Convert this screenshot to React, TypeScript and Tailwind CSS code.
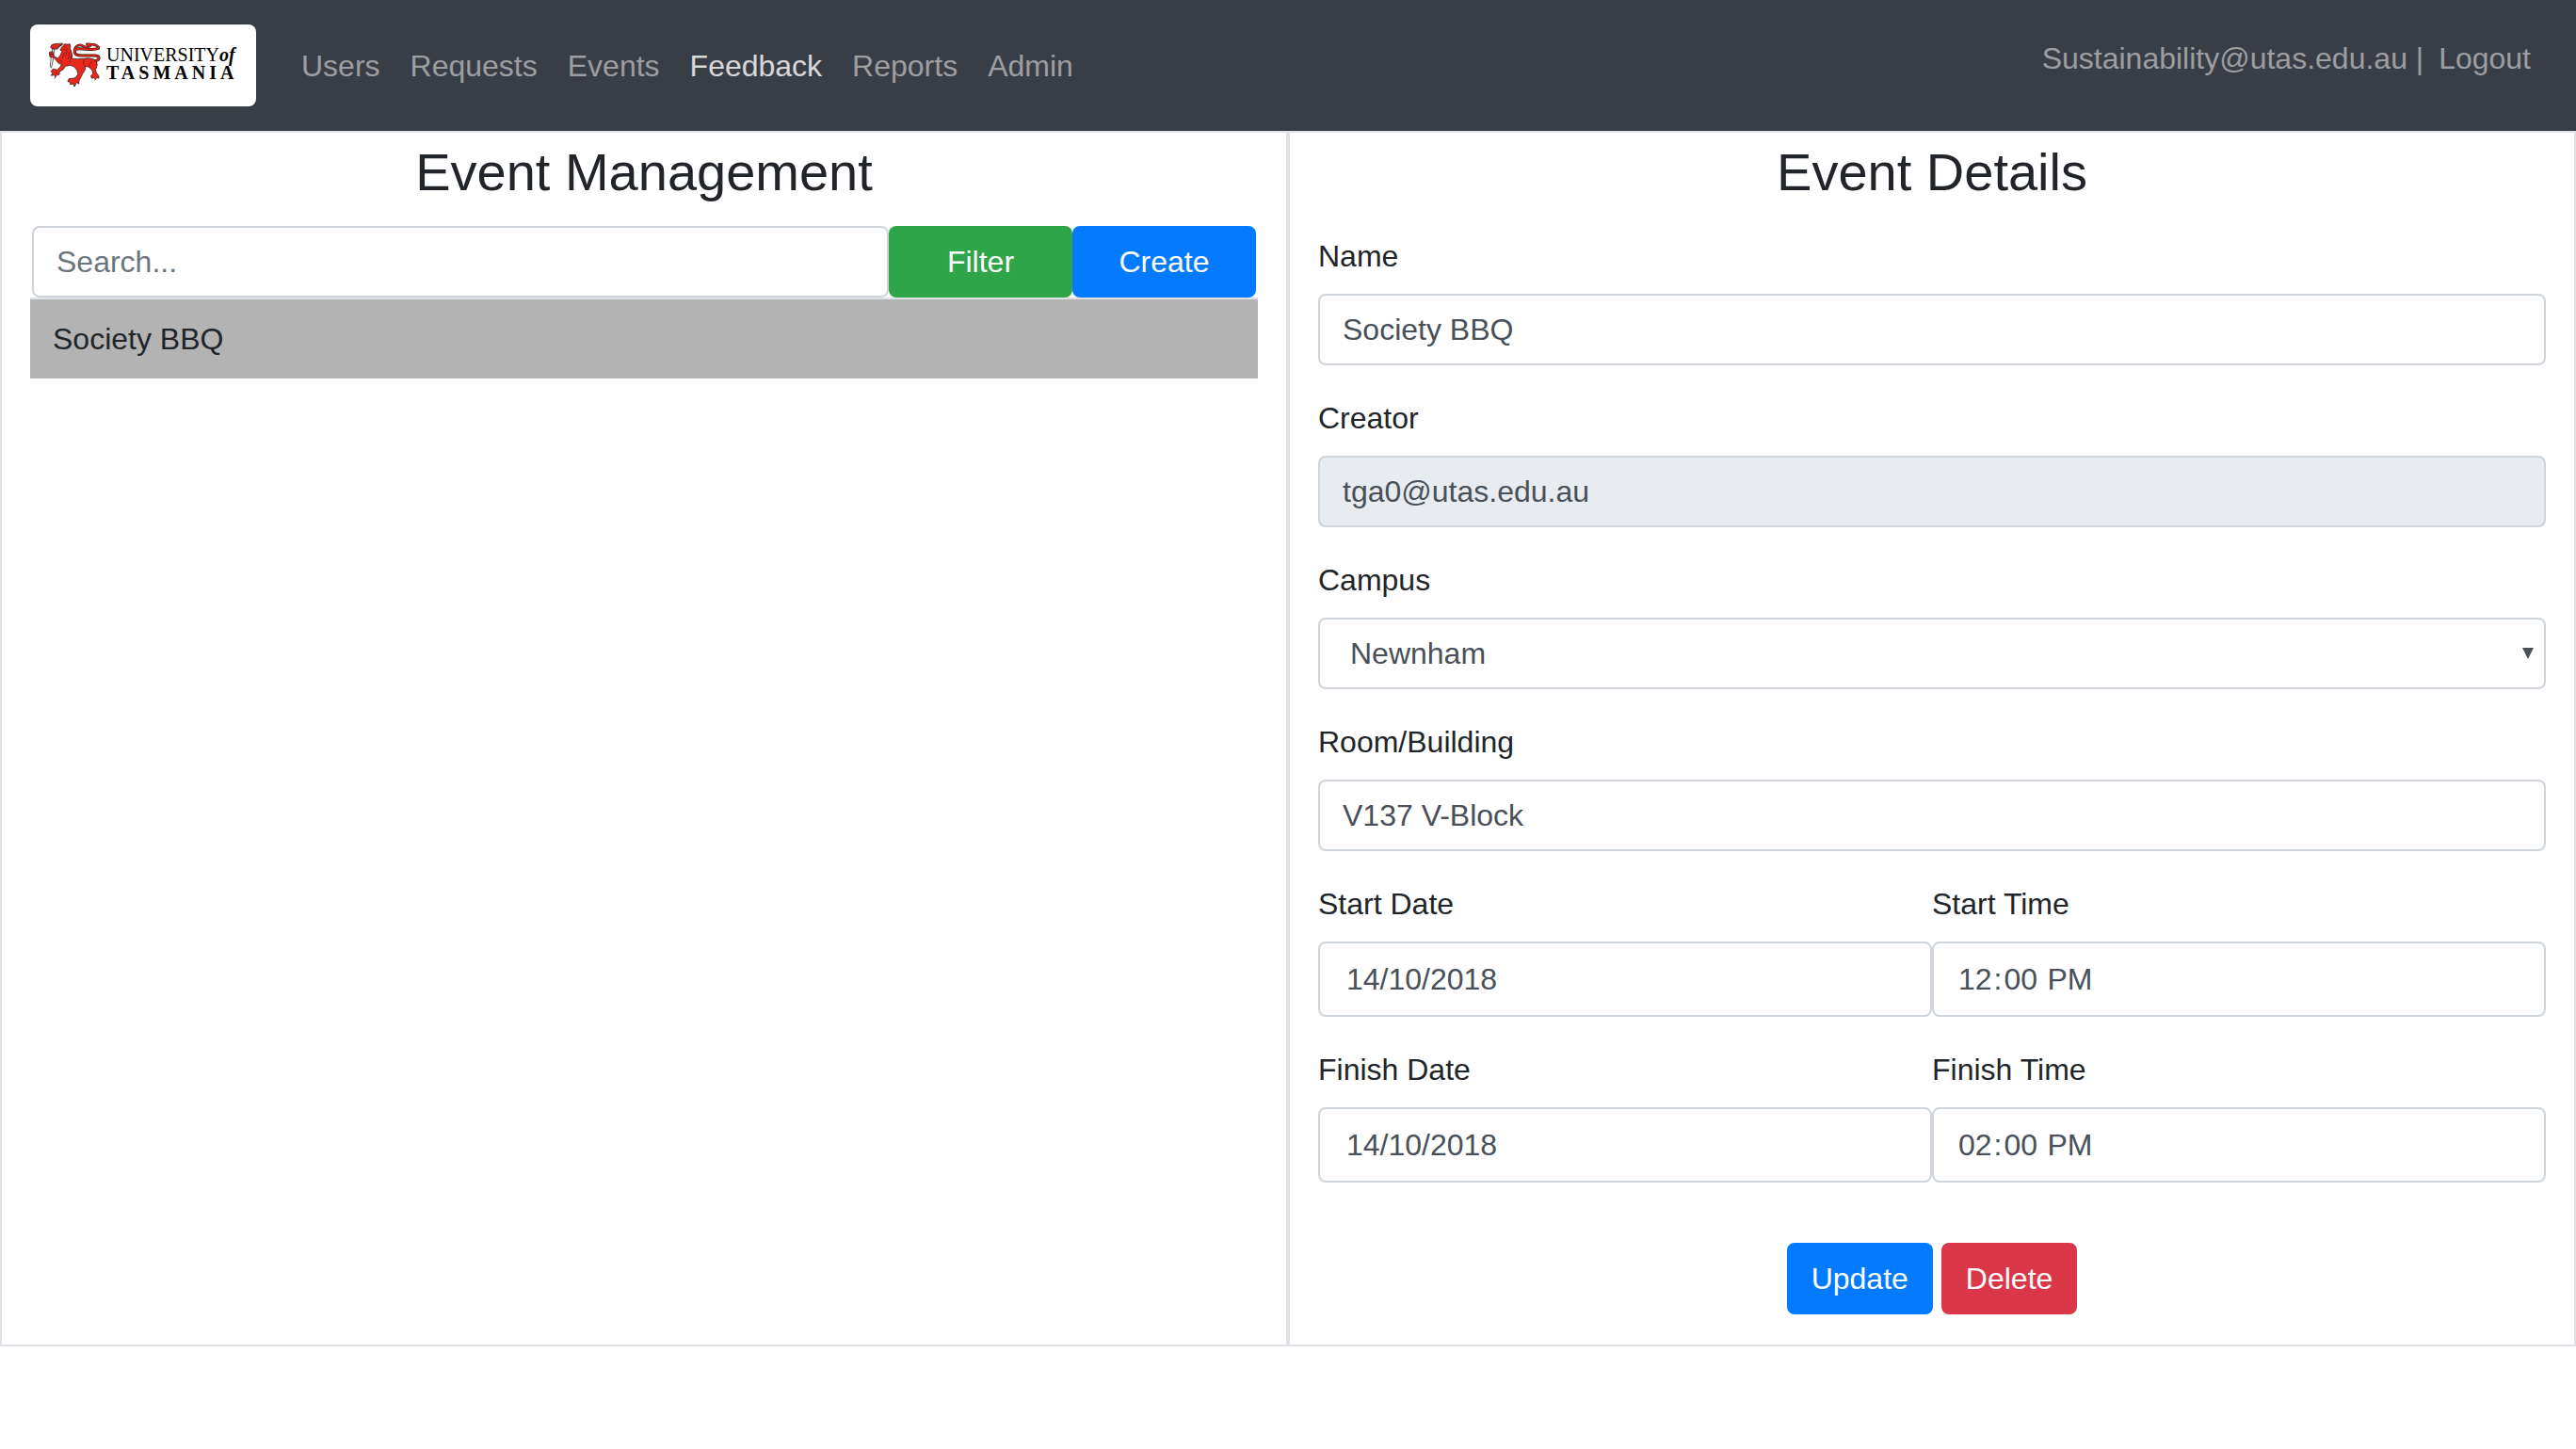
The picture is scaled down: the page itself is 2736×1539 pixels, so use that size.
import { useState, type InputHTMLAttributes, type ReactNode } from "react";

const control =
  "block w-full rounded-lg border-2 border-[#ced4da] bg-white text-[32px] leading-[48px] text-[#495057] outline-none focus:border-[#80bdff]";

const button = "h-[76px] rounded-lg text-[32px] leading-[48px] text-white";

const timeParts =
  "[&::-webkit-calendar-picker-indicator]:hidden [&::-webkit-datetime-edit-hour-field]:p-0.5 [&::-webkit-datetime-edit-minute-field]:p-0.5 [&::-webkit-datetime-edit-ampm-field]:p-0.5";

function Field({ id, label, children }: { id: string; label: string; children: ReactNode }) {
  return (
    <div className="mb-8">
      <label htmlFor={id} className="mb-4 block">
        {label}
      </label>
      {children}
    </div>
  );
}

function TextInput({ size, ...props }: Omit<InputHTMLAttributes<HTMLInputElement>, "size"> & { size?: "date" | "time" }) {
  const shape = size === "date" ? "h-20 px-7" : size === "time" ? `h-20 px-6 ${timeParts}` : "h-[76px] px-6";
  return <input {...props} className={`${control} ${shape} read-only:bg-[#e8ebf0]`} />;
}

function Lion() {
  return (
    <svg viewBox="154 136 166 144" className="h-12 w-[55px]" aria-hidden="true">
      <g fill="none" strokeLinecap="round" strokeLinejoin="round">
        <path d="M296 196Q316 194 314 184Q312 176 294 178L258 178Q238 178 236 166Q236 155 252 156L288 158Q300 159 312 155" stroke="#1b0d0b" strokeWidth="9" />
        <path d="M236 162Q236 150 248 145Q256 142 264 148Q276 154 286 147L276 141L300 143Q308 146 313 151" stroke="#1b0d0b" strokeWidth="8" />
        <path d="M296 196Q316 194 314 184Q312 176 294 178L258 178Q238 178 236 166Q236 155 252 156L288 158Q300 159 312 155" stroke="#e1261c" strokeWidth="5.5" />
        <path d="M236 162Q236 150 248 145Q256 142 264 148Q276 154 286 147L276 141L300 143Q308 146 313 151" stroke="#e1261c" strokeWidth="4.5" />
      </g>
      <g stroke="#1b0d0b" strokeWidth="2" strokeLinejoin="round">
        <path fill="#fff" d="M165 156L172 156L166 198L162 216L158 214L160 192Z" />
        <path fill="#e1261c" d="M159 151Q161 141 174 140L198 139Q195 145 188 147Q186 154 176 157L163 156Z" />
        <path fill="none" d="M178 160Q186 146 208 140" />
        <path
          fill="#e8281c"
          d="M205 142L221 141L223 148L222 156L226 166L229 178L227 187Q244 190 262 188Q282 184 296 189Q308 196 309 207L304 222L305 232L313 242L314 251L307 248L303 255L298 249L291 251L288 243L295 236L292 224L282 215L271 212L270 223L262 236L256 249L251 257L250 269L243 264L236 277L233 268L222 271L223 264L214 261L218 252L231 251L239 249L247 237L244 225L235 214L223 209L207 212L200 222L188 230L187 239L180 240L174 248L172 240L161 242L165 234L160 228L168 220L180 224L191 213L194 205L185 203L176 192L169 184L157 182L155 167L166 165L170 180L183 187L190 177L196 164L190 160L195 151Z"
        />
        <path fill="none" d="M201 151L212 149M197 158L207 160L214 154M213 161L207 180M221 162L215 190M203 169L197 188M226 177L220 200M188 193L198 199M268 191Q259 206 271 213M292 196Q282 206 283 216M244 253L248 249M174 234L181 231" strokeWidth="1.3" />
        <path fill="#fff" d="M236 277L233 273M174 248L171 252M303 255L300 258M155 174L166 174" />
      </g>
    </svg>
  );
}

function Logo() {
  return (
    <a href="#home" aria-label="University of Tasmania" className="flex h-[87px] w-60 items-start rounded-lg bg-white pt-[19px] pl-5 font-['Liberation_Serif',serif] text-[20px] leading-[19px] text-black">
      <Lion />
      <span className="ml-1.5 flex flex-col pt-1 whitespace-nowrap">
        <span>
          UNIVERSITY<b className="italic">of</b>
        </span>
        <span className="font-bold tracking-[4px]">TASMANIA</span>
      </span>
    </a>
  );
}

const links = ["Users", "Requests", "Events", "Feedback", "Reports", "Admin"];

export default function App() {
  const [event, setEvent] = useState({
    name: "Society BBQ",
    campus: "Newnham",
    room: "V137 V-Block",
    startDate: "14/10/2018",
    startTime: "12:00",
    finishDate: "14/10/2018",
    finishTime: "14:00",
  });
  const bind = (key: keyof typeof event) => ({
    id: key,
    value: event[key],
    onChange: (e: { target: { value: string } }) => setEvent({ ...event, [key]: e.target.value }),
  });

  return (
    <div className="min-h-screen bg-white font-['Liberation_Sans',Arial,sans-serif] text-[32px] leading-[48px] text-[#212529]">
      <header className="flex items-center bg-[#393d45] py-[26px] pr-12 pl-8">
        <Logo />
        <nav className="ml-12 flex gap-8">
          {links.map((l) => (
            <a key={l} href={`#${l.toLowerCase()}`} className={l === "Feedback" ? "text-white/80" : "text-white/50"}>
              {l}
            </a>
          ))}
        </nav>
        <div className="mb-4 ml-auto flex text-white/50">
          <span>Sustainability@utas.edu.au |</span>
          <a href="#logout" className="ml-4">
            Logout
          </a>
        </div>
      </header>

      <main className="grid grid-cols-2">
        <section className="border-2 border-[#dee2e6] px-[30px] pt-2">
          <h1 className="mb-6 text-center text-[56px] leading-[67px]">Event Management</h1>
          <form className="flex px-0.5" onSubmit={(e) => e.preventDefault()}>
            <input
              type="search"
              aria-label="Search events"
              placeholder="Search..."
              className={`${control} h-[76px] min-w-0 flex-1 px-6 placeholder:text-[#6c757d]`}
            />
            <button type="submit" className={`${button} w-[15%] bg-[#2fa549]`}>
              Filter
            </button>
            <button type="button" className={`${button} w-[15%] bg-[#047bff]`}>
              Create
            </button>
          </form>
          <table className="w-full border-separate border-spacing-0">
            <tbody>
              <tr>
                <td className="border-t-2 border-[#dee2e6] bg-[#b3b3b3] px-6 py-[18px]">Society BBQ</td>
              </tr>
            </tbody>
          </table>
        </section>

        <section className="border-2 border-[#dee2e6] px-[30px] pt-2 pb-8">
          <h1 className="mb-8 text-center text-[56px] leading-[67px]">Event Details</h1>
          <form onSubmit={(e) => e.preventDefault()}>
            <Field id="name" label="Name">
              <TextInput type="text" {...bind("name")} />
            </Field>
            <Field id="creator" label="Creator">
              <TextInput type="text" id="creator" value="tga0@utas.edu.au" readOnly />
            </Field>
            <Field id="campus" label="Campus">
              <div className="relative">
                <select {...bind("campus")} className={`${control} h-[76px] appearance-none px-8`}>
                  <option>Newnham</option>
                  <option>Sandy Bay</option>
                </select>
                <svg viewBox="0 0 12 12" className="pointer-events-none absolute top-8 right-[13px] size-3 fill-[#495057]" aria-hidden="true">
                  <path d="M0 0h12L6 12z" />
                </svg>
              </div>
            </Field>
            <Field id="room" label="Room/Building">
              <TextInput type="text" {...bind("room")} />
            </Field>
            <div className="grid grid-cols-2">
              <Field id="startDate" label="Start Date">
                <TextInput size="date" type="text" {...bind("startDate")} />
              </Field>
              <Field id="startTime" label="Start Time">
                <TextInput size="time" type="time" {...bind("startTime")} />
              </Field>
              <Field id="finishDate" label="Finish Date">
                <TextInput size="date" type="text" {...bind("finishDate")} />
              </Field>
              <Field id="finishTime" label="Finish Time">
                <TextInput size="time" type="time" {...bind("finishTime")} />
              </Field>
            </div>
            <div className="mt-8 flex justify-center gap-[9px]">
              <button type="submit" className={`${button} bg-[#047bff] px-[26px]`}>
                Update
              </button>
              <button type="button" className={`${button} bg-[#da3849] px-[26px]`}>
                Delete
              </button>
            </div>
          </form>
        </section>
      </main>
    </div>
  );
}
